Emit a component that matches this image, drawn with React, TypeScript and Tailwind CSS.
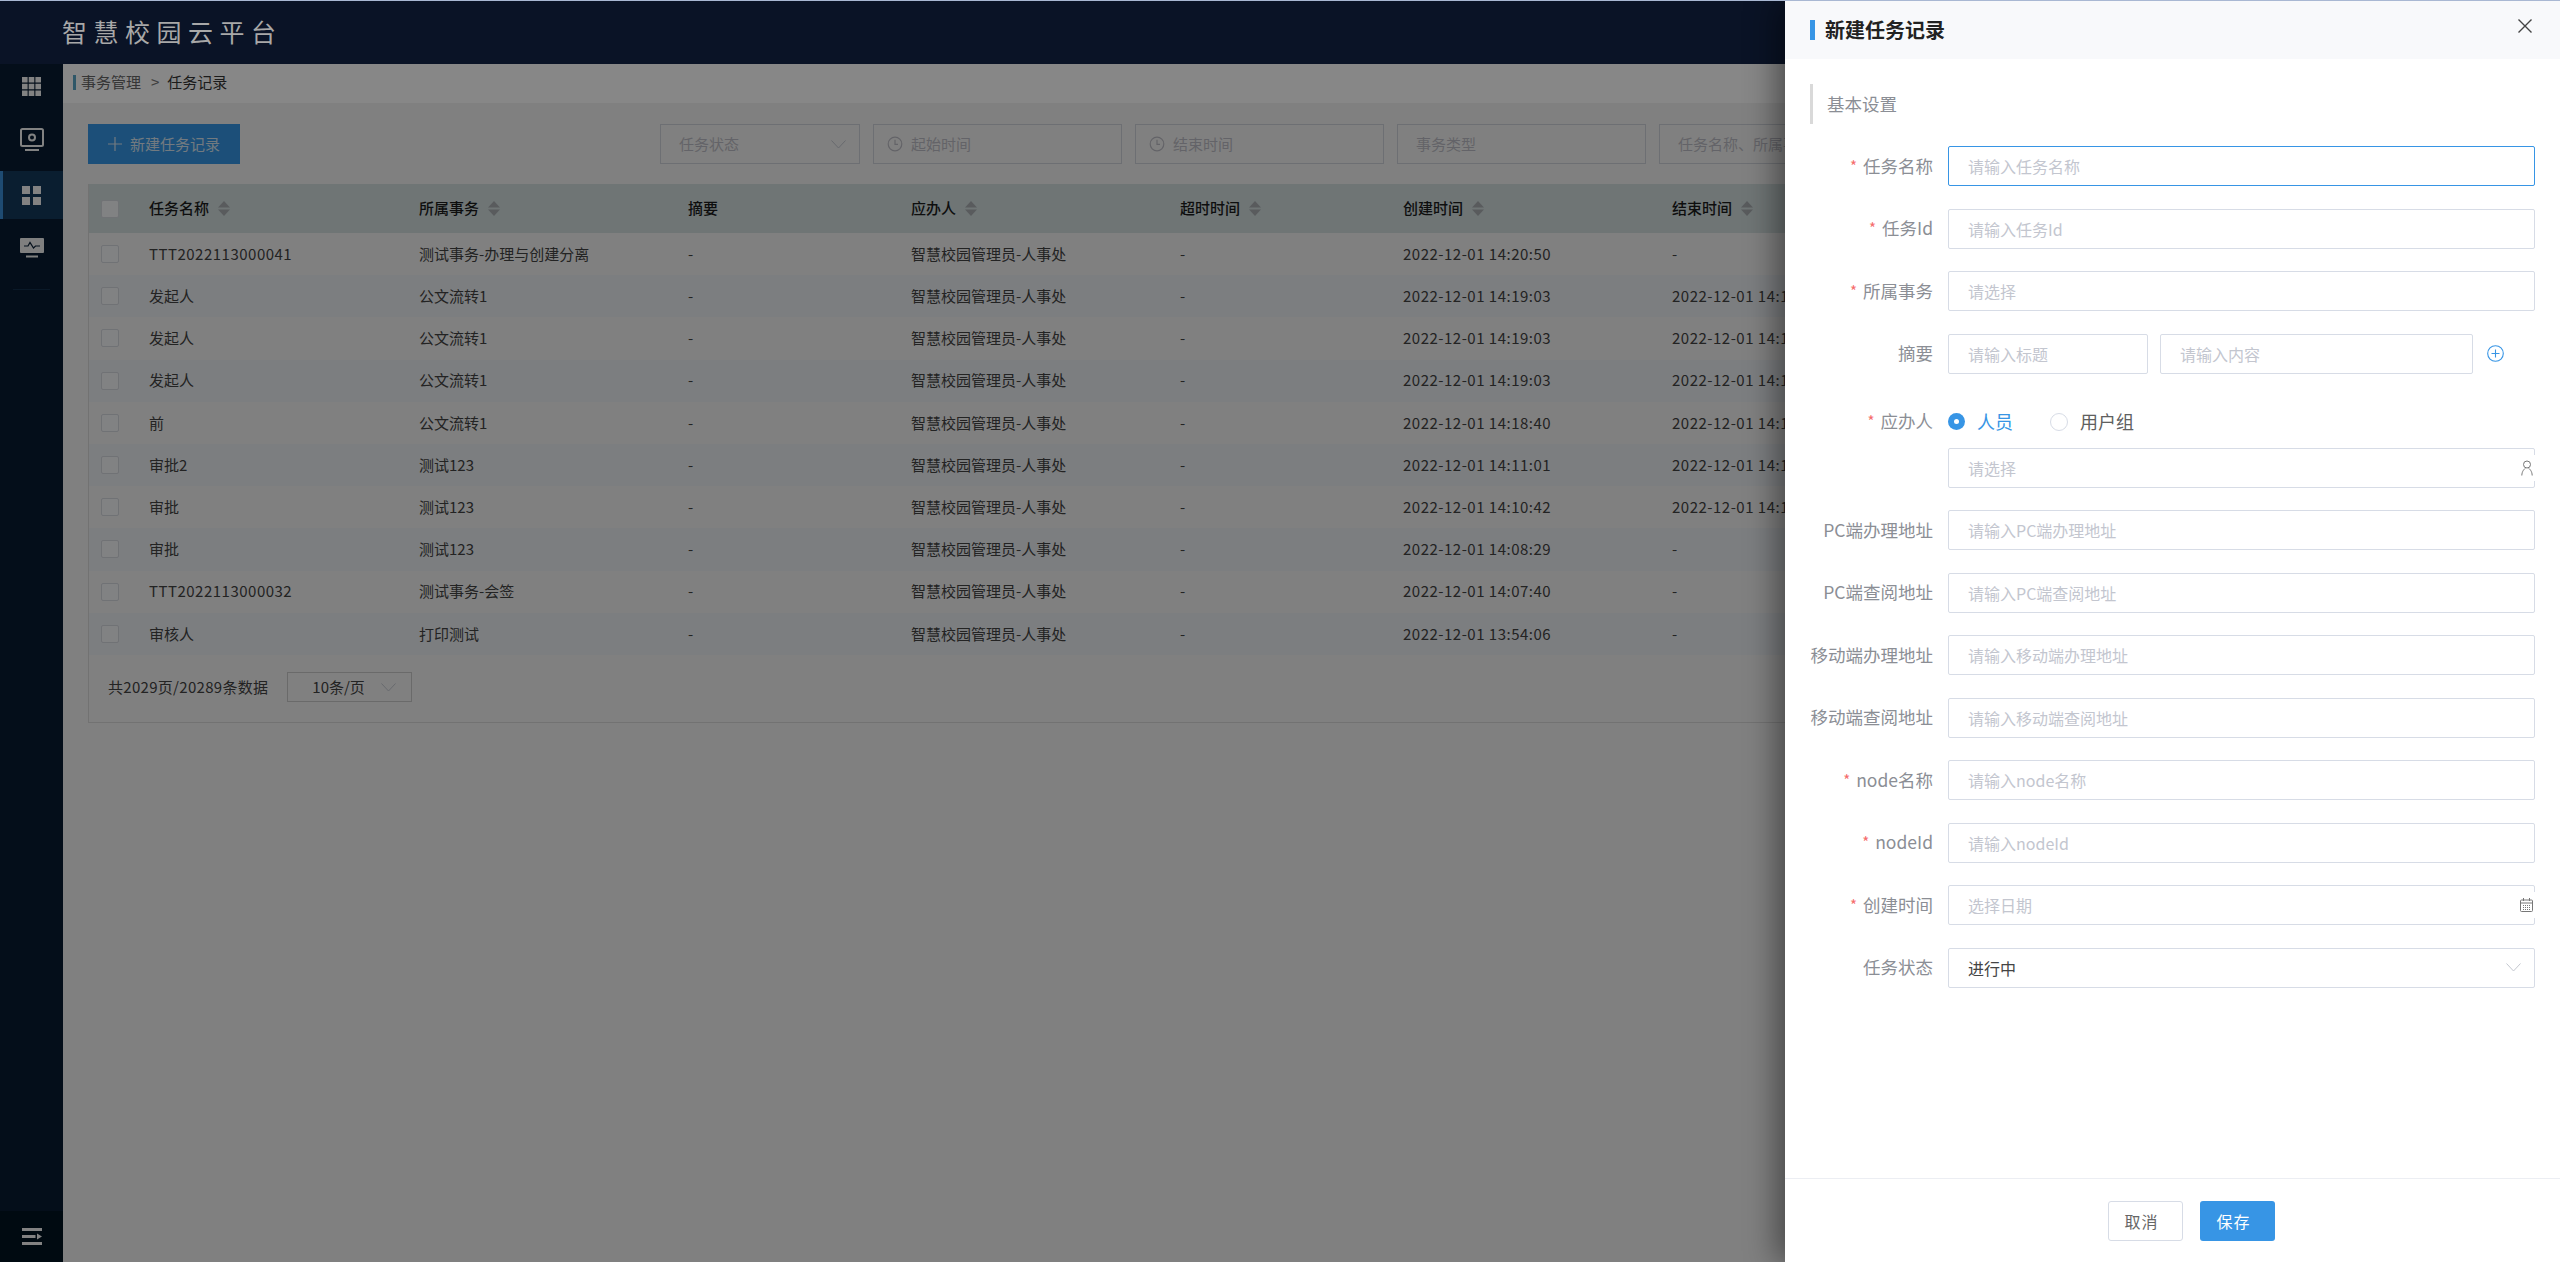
const tasks = [
  { name: "TTT2022113000041", biz: "测试事务-办理与创建分离", created: "2022-12-01 14:20:50", ended: "-" },
  { name: "发起人", biz: "公文流转1", created: "2022-12-01 14:19:03", ended: "2022-12-01 14:19:03" },
  { name: "发起人", biz: "公文流转1", created: "2022-12-01 14:19:03", ended: "2022-12-01 14:19:03" },
  { name: "发起人", biz: "公文流转1", created: "2022-12-01 14:19:03", ended: "2022-12-01 14:19:03" },
  { name: "前", biz: "公文流转1", created: "2022-12-01 14:18:40", ended: "2022-12-01 14:18:40" },
  { name: "审批2", biz: "测试123", created: "2022-12-01 14:11:01", ended: "2022-12-01 14:11:01" },
  { name: "审批", biz: "测试123", created: "2022-12-01 14:10:42", ended: "2022-12-01 14:10:42" },
  { name: "审批", biz: "测试123", created: "2022-12-01 14:08:29", ended: "-" },
  { name: "TTT2022113000032", biz: "测试事务-会签", created: "2022-12-01 14:07:40", ended: "-" },
  { name: "审核人", biz: "打印测试", created: "2022-12-01 13:54:06", ended: "-" },
];

const columns = "grid grid-cols-[60px_270px_269px_223px_269px_223px_269px_1fr]";

function SortIcon() {
  return (
    <svg width="12" height="15" viewBox="0 0 12 15" className="ml-[9px] shrink-0">
      <path d="M6 0 L12 6.5 H0 Z M0 8.5 H12 L6 15 Z" fill="#a9adb0" />
    </svg>
  );
}

function Chevron({ className }: { className?: string }) {
  return (
    <svg width="15" height="9" viewBox="0 0 15 9" fill="none" stroke="#c3c7cf" strokeWidth="1" className={className}>
      <path d="M0.5 0.5 L7.5 8 L14.5 0.5" />
    </svg>
  );
}

function Clock() {
  return (
    <svg width="16" height="16" viewBox="0 0 16 16" fill="none" stroke="#bcbcc4" strokeWidth="1.2" className="shrink-0">
      <circle cx="8" cy="8" r="6.8" />
      <path d="M8 3.8 V8.4 H11" />
    </svg>
  );
}

function Checkbox() {
  return <div className="h-[18px] w-[18px] rounded-[2px] border border-[#d4d7de] bg-[#f4f5f7]" />;
}

function FilterBox({ text, width, icon, chevron }: { text: string; width: string; icon?: boolean; chevron?: boolean }) {
  return (
    <div className={`flex h-10 shrink-0 items-center border border-[#cfd2da] pl-[13px] pr-[13px] text-[15px] text-[#bcbcc4] ${width}`}>
      {icon && <span className="mr-[8px]"><Clock /></span>}
      <span className={icon ? "" : "pl-[5px]"}>{text}</span>
      {chevron && <Chevron className="ml-auto" />}
    </div>
  );
}

function HeadCell({ label, sort = true }: { label: string; sort?: boolean }) {
  return (
    <div className="flex items-center text-[15px] font-medium text-[#1c1c1c]">
      <span>{label}</span>
      {sort && <SortIcon />}
    </div>
  );
}

function Sidebar() {
  return (
    <aside className="relative flex w-[63px] shrink-0 flex-col bg-[#081c31]">
      <div className="flex h-[44px] items-center justify-center">
        <svg width="19" height="19" viewBox="0 0 19 19" fill="#f5f5f5">
          <path d="M0 0h5.6v5.6H0zM6.7 0h5.6v5.6H6.7zM13.4 0H19v5.6h-5.6zM0 6.7h5.6v5.6H0zM6.7 6.7h5.6v5.6H6.7zM13.4 6.7H19v5.6h-5.6zM0 13.4h5.6V19H0zM6.7 13.4h5.6V19H6.7zM13.4 13.4H19V19h-5.6z" />
        </svg>
      </div>
      <div className="flex h-[63px] items-center justify-center">
        <svg width="24" height="23" viewBox="0 0 24 23" fill="none" stroke="#f5f5f5" strokeWidth="2">
          <rect x="1" y="1" width="22" height="17" rx="1.5" />
          <circle cx="12" cy="9.5" r="3" />
          <path d="M5 22h14" />
        </svg>
      </div>
      <div className="flex h-[48px] items-center justify-center border-l-[3px] border-[#3a8fd8] bg-[#13395b] pr-[3px]">
        <svg width="19" height="19" viewBox="0 0 19 19" fill="#f5f5f5">
          <path d="M0 0h8v8H0zM11 0h8v8h-8zM0 11h8v8H0zM11 11h8v8h-8z" />
        </svg>
      </div>
      <div className="flex h-[58px] items-center justify-center">
        <svg width="24" height="20" viewBox="0 0 24 20" fill="none">
          <path d="M1 0h22a1 1 0 0 1 1 1v13a1 1 0 0 1-1 1H1a1 1 0 0 1-1-1V1a1 1 0 0 1 1-1z" fill="#f0f0f0" />
          <path d="M4 8h4l2-3.5L13.5 10l2-2H20" stroke="#0b2036" strokeWidth="1.2" />
          <path d="M6 18.5h12" stroke="#f0f0f0" strokeWidth="2" />
        </svg>
      </div>
      <div className="mx-[13px] mt-[12px] border-t border-[#13304c]" />
      <div className="mt-auto flex h-[51px] items-center justify-center bg-[#001320]">
        <svg width="20" height="17" viewBox="0 0 20 17" fill="#f5f5f5">
          <path d="M0 0h20v3H0zM0 7h13.5v3H0zM0 14h20v3H0zM15 5.5 L20 8.5 L15 11.5z" />
        </svg>
      </div>
    </aside>
  );
}

function TablePanel() {
  return (
    <div className="mt-5 border-b border-l border-[#d8d8d8]">
      <div className={`${columns} h-[49px] items-center bg-[#d1ddde]`}>
        <div className="pl-[12px]"><Checkbox /></div>
        <HeadCell label="任务名称" />
        <HeadCell label="所属事务" />
        <HeadCell label="摘要" sort={false} />
        <HeadCell label="应办人" />
        <HeadCell label="超时时间" />
        <HeadCell label="创建时间" />
        <HeadCell label="结束时间" />
      </div>
      {tasks.map((task, index) => (
        <div
          key={index}
          className={`${columns} h-[42.2px] items-center text-[15px] text-[#424242] ${index % 2 === 1 ? "bg-[#ebeff2]" : ""}`}
        >
          <div className="pl-[12px]"><Checkbox /></div>
          <div className={task.name.startsWith("TTT") ? "tracking-[0.5px]" : ""}>{task.name}</div>
          <div>{task.biz}</div>
          <div>-</div>
          <div>智慧校园管理员-人事处</div>
          <div>-</div>
          <div className="tracking-[0.5px]">{task.created}</div>
          <div className="tracking-[0.5px]">{task.ended}</div>
        </div>
      ))}
      <div className="flex h-[67px] items-center pb-[2px] pl-[19px] text-[15px] text-[#424242]">
        <span className="tracking-[0.3px]">共2029页/20289条数据</span>
        <div className="ml-[19px] flex h-[30px] w-[125px] items-center border border-[#c8c8c8] pl-[24px]">
          <span>10条/页</span>
          <Chevron className="ml-auto mr-[15px]" />
        </div>
      </div>
    </div>
  );
}

function Field({ label, required, children }: { label?: string; required?: boolean; children: React.ReactNode }) {
  return (
    <div className="flex items-start">
      <label className="flex h-10 w-[123px] shrink-0 items-center justify-end whitespace-nowrap text-[17.5px] text-[#8b8e95]">
        {required && <span className="mr-[6px] text-[15px] text-[#f56c6c]">*</span>}
        {label}
      </label>
      <div className="ml-[15px] min-w-0 flex-1">{children}</div>
    </div>
  );
}

const inputClass = "block h-10 w-full rounded-[2px] border bg-white pl-[19px] text-[16px] text-[#555] outline-none placeholder:text-[#c3c6cf]";

function TextField({ label, required, placeholder, focused }: { label: string; required?: boolean; placeholder: string; focused?: boolean }) {
  return (
    <Field label={label} required={required}>
      <input placeholder={placeholder} className={`${inputClass} ${focused ? "border-[#3795e5]" : "border-[#d7dce6]"}`} />
    </Field>
  );
}

function RightIcon({ children }: { children: React.ReactNode }) {
  return <div className="absolute right-0 top-1/2 flex h-[26px] -translate-y-1/2 items-center bg-white pr-[2px]">{children}</div>;
}

function Drawer() {
  return (
    <div className="absolute bottom-0 right-0 top-0 z-20 flex w-[775px] flex-col bg-white shadow-[-8px_0_30px_rgba(0,0,0,0.45)]">
      <div className="relative flex h-[59px] shrink-0 items-center bg-[#f8f9fb] pl-[25px] pt-[1px]">
        <span className="h-5 w-[5px] bg-[#3795e5]" />
        <span className="ml-[10px] text-[20px] font-semibold text-[#222]">新建任务记录</span>
        <svg width="14" height="14" viewBox="0 0 14 14" stroke="#444" strokeWidth="1.4" className="absolute right-[28px] top-[19px]">
          <path d="M0.5 0.5 L13.5 13.5 M13.5 0.5 L0.5 13.5" />
        </svg>
      </div>

      <div className="flex-1 pl-[25px] pr-[25px] pt-[25px]">
        <div className="flex h-10 items-center border-l-[3px] border-[#d9d9d9] pl-[14px] text-[17.5px] text-[#8b8e95]">基本设置</div>
        <div className="mt-[22px] flex flex-col gap-[22.5px]">
          <TextField label="任务名称" required placeholder="请输入任务名称" focused />
          <TextField label="任务Id" required placeholder="请输入任务Id" />
          <TextField label="所属事务" required placeholder="请选择" />
          <Field label="摘要">
            <div className="flex items-center">
              <input placeholder="请输入标题" className={`${inputClass} !w-[200px] shrink-0 border-[#d7dce6]`} />
              <input placeholder="请输入内容" className={`${inputClass} ml-[12px] !w-[313px] shrink-0 border-[#d7dce6]`} />
              <svg width="17" height="17" viewBox="0 0 17 17" fill="none" stroke="#3795e5" strokeWidth="1.1" className="ml-[14px]">
                <circle cx="8.5" cy="8.5" r="7.8" />
                <path d="M8.5 4.5v8M4.5 8.5h8" />
              </svg>
            </div>
          </Field>
          <div className="flex items-start">
            <label className="flex h-[51px] w-[123px] shrink-0 items-center justify-end text-[17.5px] text-[#8b8e95]">
              <span className="mr-[6px] text-[15px] text-[#f56c6c]">*</span>
              应办人
            </label>
            <div className="ml-[15px] min-w-0 flex-1">
              <div className="flex h-[51.5px] items-center text-[18px]">
                <span className="flex h-[17px] w-[17px] items-center justify-center rounded-full bg-[#3795e5]">
                  <span className="h-[5px] w-[5px] rounded-full bg-white" />
                </span>
                <span className="ml-3 text-[#3795e5]">人员</span>
                <span className="ml-[37px] h-[18px] w-[18px] rounded-full border border-[#d7dce6]" />
                <span className="ml-3 text-[#606060]">用户组</span>
              </div>
              <div className="relative">
                <input placeholder="请选择" className={`${inputClass} border-[#d7dce6]`} />
                <RightIcon>
                  <svg width="12" height="16" viewBox="0 0 12 16" fill="none" stroke="#777" strokeWidth="1">
                    <circle cx="6" cy="4.5" r="3.5" />
                    <path d="M0.8 15.5 C1 11 3 9.5 4.5 8 M11.2 15.5 C11 11 9 9.5 7.5 8" />
                  </svg>
                </RightIcon>
              </div>
            </div>
          </div>
          <TextField label="PC端办理地址" placeholder="请输入PC端办理地址" />
          <TextField label="PC端查阅地址" placeholder="请输入PC端查阅地址" />
          <TextField label="移动端办理地址" placeholder="请输入移动端办理地址" />
          <TextField label="移动端查阅地址" placeholder="请输入移动端查阅地址" />
          <TextField label="node名称" required placeholder="请输入node名称" />
          <TextField label="nodeId" required placeholder="请输入nodeId" />
          <Field label="创建时间" required>
            <div className="relative">
              <input placeholder="选择日期" className={`${inputClass} border-[#d7dce6]`} />
              <RightIcon>
                <svg width="13" height="14" viewBox="0 0 13 14" fill="none" stroke="#777" strokeWidth="1">
                  <rect x="0.5" y="2" width="12" height="11.5" rx="1" />
                  <path d="M0.5 5h12M3.5 0v3M9.5 0v3" />
                  <path d="M3 7.5h7M3 9.5h7M3 11.5h7" strokeDasharray="1 1" />
                </svg>
              </RightIcon>
            </div>
          </Field>
          <Field label="任务状态">
            <div className="flex h-10 items-center rounded-[2px] border border-[#d7dce6] pl-[19px] pr-[13px] text-[16px] text-[#444]">
              <span>进行中</span>
              <Chevron className="ml-auto" />
            </div>
          </Field>
        </div>
      </div>

      <div className="flex h-[84px] shrink-0 items-start justify-center gap-[17px] border-t border-[#eceef3] pl-[38px] pt-[22px] text-[16px]">
        <button className="h-10 w-[75px] rounded-[3px] border border-[#d7dce6] bg-white pr-[8px] tracking-[1px] text-[#666]">取消</button>
        <button className="h-10 w-[75px] rounded-[3px] bg-[#3795e5] pr-[8px] tracking-[1px] text-white">保存</button>
      </div>
    </div>
  );
}

export default function App() {
  return (
    <div className="relative flex h-screen w-full flex-col overflow-hidden bg-[#f2f2f2] [font-family:'Noto_Sans_CJK_SC','Noto_Sans',sans-serif]">
      <header className="flex h-16 shrink-0 items-center bg-[#132448] pl-[62px]">
        <span className="relative z-10 text-[25px] tracking-[6.5px] text-[#a8a8a8]">智慧校园云平台</span>
      </header>
      <div className="flex min-h-0 flex-1">
        <Sidebar />
        <main className="min-w-0 flex-1">
          <div className="flex h-[39px] items-center bg-white pb-[3px] pl-[10px] text-[15px]">
            <span className="h-[15px] w-[3px] bg-[#5aa5c4]" />
            <span className="ml-[5px] text-[#666]">事务管理</span>
            <span className="ml-[10px] text-[#777]">&gt;</span>
            <span className="ml-[8px] text-[#333]">任务记录</span>
          </div>
          <div className="pl-[25px] pr-[24px] pt-[21px]">
            <div className="flex items-start">
              <button className="flex h-10 w-[152px] shrink-0 items-center bg-[#3595e5] pl-[20px] text-[15px] text-[#d8e6f2]">
                <svg width="14" height="14" viewBox="0 0 14 14" stroke="#d8e6f2" strokeWidth="1.2">
                  <path d="M7 0v14M0 7h14" />
                </svg>
                <span className="ml-[8px]">新建任务记录</span>
              </button>
              <div className="ml-[420px] flex shrink-0 gap-[13px]">
                <FilterBox text="任务状态" width="w-[200px]" chevron />
                <FilterBox text="起始时间" width="w-[249px]" icon />
                <FilterBox text="结束时间" width="w-[249px]" icon />
                <FilterBox text="事务类型" width="w-[249px]" />
                <FilterBox text="任务名称、所属事务" width="w-[249px]" />
              </div>
            </div>
            <TablePanel />
          </div>
        </main>
      </div>
      {/* mask sits over the page, the drawer over the mask */}
      <div className="absolute inset-0 bg-black/[0.47]" />
      <Drawer />
      <div className="absolute inset-x-0 top-0 z-30 h-px bg-[#a9b8d3]" />
    </div>
  );
}
